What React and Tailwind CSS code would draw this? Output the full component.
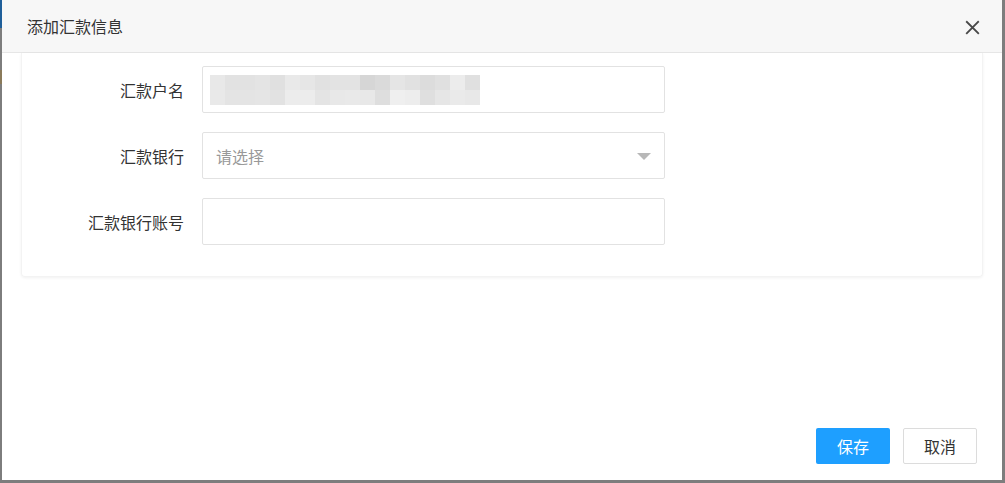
const blocks = [
  ["#e8e8e8", "#e2e2e2", "#e2e2e2", "#e4e4e4", "#e0e0e0", "#e9e9e9", "#e6e6e6", "#e1e1e1", "#e3e3e3", "#e3e3e3", "#d6d6d6", "#dadada", "#e5e5e5", "#e1e1e1", "#dcdcdc", "#e0e0e0", "#ececec", "#e0e0e0"],
  ["#e9e9e9", "#e4e4e4", "#e4e4e4", "#e5e5e5", "#e2e2e2", "#ececec", "#ececec", "#e4e4e4", "#e8e8e8", "#e9e9e9", "#e8e8e8", "#dedede", "#efefef", "#ededed", "#dfdfdf", "#e6e6e6", "#eaeaea", "#e8e8e8"],
];

const Field = ({ label, children }) => (
  <div className="flex items-center">
    <label className="w-[180px] pr-[18px] text-right text-[16px] text-[#333]">{label}</label>
    <div className="w-[463px] h-[47px] border border-[#e2e2e2] rounded-[2px] bg-white flex items-center relative">
      {children}
    </div>
  </div>
);

export default function App() {
  return (
    <div
      className="w-[1005px] h-[483px] bg-[#7d7d7d] flex overflow-hidden"
      style={{ fontFamily: '"Noto Sans CJK SC", "Noto Sans", sans-serif' }}
    >
      <div className="w-[2px] flex flex-col">
        <div className="h-[28px] bg-[#1f5f9a]" />
        <div className="h-[42px]" />
        <div className="h-[14px] bg-[#8a7a5a]" />
      </div>
      <div className="w-[1000px] h-[480px] bg-white flex flex-col">
        <div className="h-[53px] bg-[#f7f7f7] border-b border-[#e6e6e6] flex items-center justify-between pl-[25px] pr-[22px]">
          <span className="text-[16px] text-[#333]">添加汇款信息</span>
          <svg width="15" height="15" viewBox="0 0 16 16" className="mt-[2px]">
            <path d="M2 2L14 14M14 2L2 14" stroke="#484848" strokeWidth="2" strokeLinecap="square" />
          </svg>
        </div>
        <div className="mx-[19px] rounded-b-[4px] shadow-[0_1px_3px_rgba(0,0,0,0.06)] border-x border-b border-[#f3f3f3] pt-[13px] pb-[31px] flex flex-col gap-[19px]">
          <Field label="汇款户名">
            <div className="ml-[7px] flex flex-col">
              {blocks.map((row, i) => (
                <div key={i} className="flex">
                  {row.map((c, j) => (
                    <div key={j} className="w-[15px] h-[15px]" style={{ background: c }} />
                  ))}
                </div>
              ))}
            </div>
          </Field>
          <Field label="汇款银行">
            <span className="pl-[13px] text-[16px] text-[#999]">请选择</span>
            <svg width="14" height="8" viewBox="0 0 14 8" className="absolute right-[13px] top-[20px]">
              <path d="M0 0H14L7 7Z" fill="#b8b8b8" />
            </svg>
          </Field>
          <Field label="汇款银行账号" />
        </div>
        <div className="flex-1" />
        <div className="flex justify-end gap-[13px] pr-[25px] pb-[16px]">
          <button className="w-[74px] h-[36px] rounded-[2px] bg-[#1e9fff] text-white text-[16px]">保存</button>
          <button className="w-[74px] h-[36px] rounded-[2px] bg-white border border-[#dcdcdc] text-[#333] text-[16px]">取消</button>
        </div>
      </div>
    </div>
  );
}
